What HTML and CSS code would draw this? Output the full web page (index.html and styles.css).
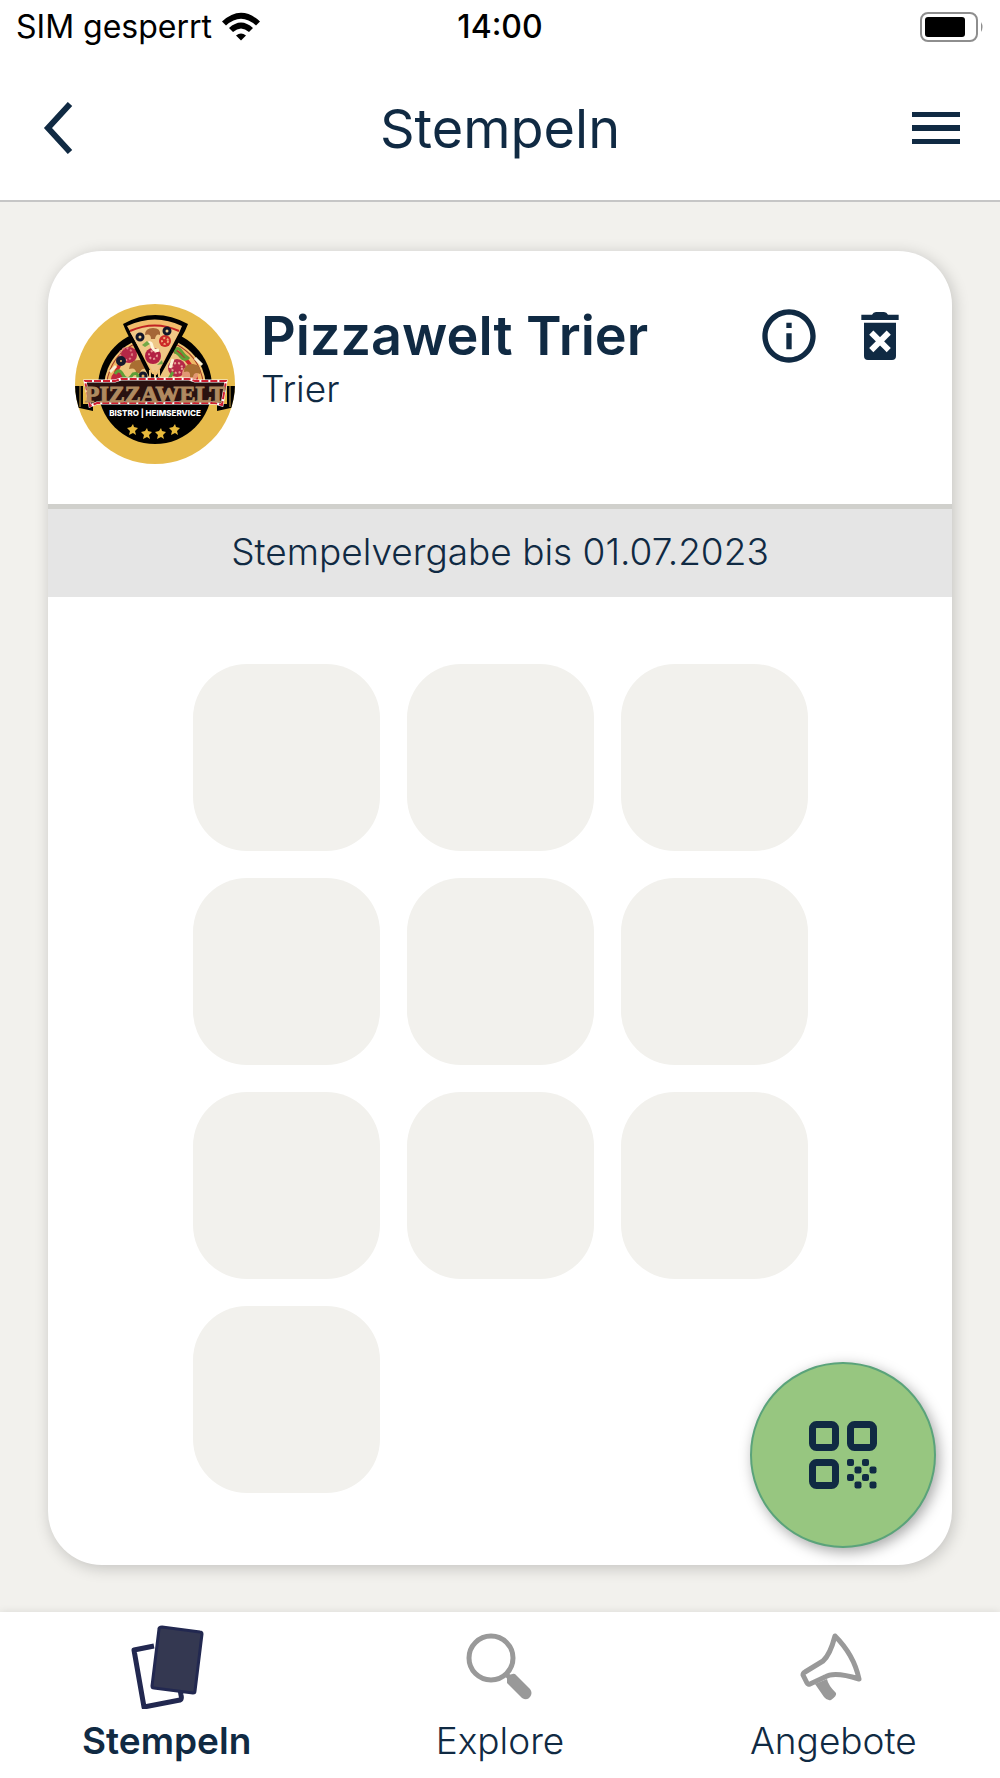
FILE: index.html
```html
<!DOCTYPE html>
<html lang="de">
<head>
  <meta charset="UTF-8">
  <meta name="viewport" content="width=device-width, initial-scale=1.0">
  <title>Stempeln</title>
  <link rel="stylesheet" href="styles.css">
</head>
<body>
  <div class="status-bar">
    <div class="carrier">
      <span>SIM gesperrt</span>
      <svg class="wifi" viewBox="0 0 38 30" aria-hidden="true">
        <path d="M0 9.500Q19-8 38 9.500L34 13.500Q19 0 4 13.500Z"/>
        <path d="M7 16Q19 5 31 16L27 20Q19 13 11 20Z"/>
        <path d="M14 23.500Q19 19.500 24 23.500L19 28.500Z"/>
      </svg>
    </div>
    <time class="clock">14:00</time>
    <svg class="battery" viewBox="0 0 64 30" aria-hidden="true">
      <rect x="1" y="1" width="56" height="28" rx="7" fill="none" stroke="#8e8e8e" stroke-width="2"/>
      <rect x="5" y="5" width="40" height="20" rx="3"/>
      <path d="M61 10q3 5 0 10z" fill="#8e8e8e"/>
    </svg>
  </div>

  <header class="header">
    <button class="icon-button" type="button" aria-label="Zurück">
      <svg class="back-icon" viewBox="0 0 30 52" aria-hidden="true">
        <path d="M27 2L5 26l22 24"/>
      </svg>
    </button>
    <h1 class="title">Stempeln</h1>
    <button class="icon-button" type="button" aria-label="Menü">
      <svg class="menu-icon" viewBox="0 0 48 32" aria-hidden="true">
        <path d="M0 0h48v5H0zM0 13h48v6H0zM0 27h48v5H0z"/>
      </svg>
    </button>
  </header>

  <main class="content">
    <article class="card">
      <div class="card-header">
        <svg class="logo" viewBox="0 0 160 160" role="img" aria-label="Pizzawelt Bistro Heimservice">
          <defs>
            <clipPath id="round"><circle cx="80" cy="80" r="80"/></clipPath>
            <clipPath id="upper"><path d="M0 0h160v80H0z"/></clipPath>
          </defs>
          <g clip-path="url(#round)">
            <path fill="#e7bb4c" d="M0 0h160v160H0z"/>
            <circle cx="80" cy="83" r="57"/>
            <!-- pizza -->
            <g clip-path="url(#upper)">
              <circle cx="80" cy="84" r="51" fill="#f3c573"/>
              <circle cx="80" cy="84" r="49" fill="#a33a25"/>
              <circle cx="80" cy="84" r="48" fill="#f0b765"/>
              <circle cx="80" cy="84" r="44" fill="#c9242b"/>
              <circle cx="80" cy="85" r="41" fill="#edc57f"/>
              <circle cx="54" cy="51" r="8" fill="#b52847"/>
              <circle cx="51" cy="50" r="6" fill="none" stroke="#dc7d82" stroke-width="2" stroke-dasharray="2 2"/>
              <circle cx="102" cy="64" r="9" fill="#b52847"/>
              <circle cx="102" cy="64" r="5" fill="none" stroke="#e7a294" stroke-width="2" stroke-dasharray="2 2"/>
              <circle cx="43" cy="75" r="7" fill="#bf263d"/>
              <circle cx="115" cy="70" r="8" fill="#e19773"/>
              <path d="M109 68q0-9 9-8t7 10q-6-3-7 3h-3q1-7-6-5z" fill="#a96e32"/>
              <path d="M54 65q1-9 10-9t7 9q-5-1-6 4h-4q0-6-7-4z" fill="#a96e32"/>
              <circle cx="46" cy="57" r="3" fill="#e9b563" stroke="#14182b" stroke-width="4"/>
              <circle cx="68" cy="72" r="3" fill="#e9b563" stroke="#14182b" stroke-width="3"/>
              <path d="M40 70q4-7 8 1t10-1q7-2 4 6M99 48q3-7 8 0t7 5q-4 5-8 0t-7-5M94 75l4-7" fill="none" stroke="#609e37" stroke-width="3"/>
              <path d="M35 68l6-6M120 54l7 7M98 55l-3 9" stroke="#f9eed0" stroke-width="3"/>
            </g>
            <!-- raised slice -->
            <path d="M48 20q32-18 65 0l-3 7-26 47q-4 9-10-1L51 27z"/>
            <path d="M52 22q28-13 55 0l-3 7-22 42-5-1-21-41z" fill="#f2bd6c"/>
            <path d="M55 28q25-11 49 0l-22 40h-4z" fill="#efc887"/>
            <path d="M55 27q25-11 49 0" fill="none" stroke="#c12324" stroke-width="2"/>
            <circle cx="78" cy="52" r="8" fill="#b32144"/>
            <circle cx="78" cy="51" r="4" fill="none" stroke="#e89894" stroke-width="2" stroke-dasharray="2 2"/>
            <circle cx="90" cy="37" r="6" fill="#cc2927"/>
            <circle cx="90" cy="37" r="3" fill="none" stroke="#efaa78" stroke-width="2" stroke-dasharray="2 2"/>
            <path d="M70 31q0-7 8-7t7 7q-4-2-5 4h-4q0-6-6-4z" fill="#a56737"/>
            <circle cx="65" cy="33" r="3" fill="#efcb89" stroke="#111629" stroke-width="3"/>
            <circle cx="92" cy="27" r="3" fill="#efcb89" stroke="#111629" stroke-width="3"/>
            <path d="M70 41q6-5 7 1t7 4" fill="none" stroke="#fff4da" stroke-width="3"/>
            <path d="M67 41l5-4 3 3-5 3zM82 61l5-5 1 4z" fill="#72a947"/>
            <path d="M75 66v8M80 66v10M84 66v7" stroke="#edbf76" stroke-width="2"/>
            <!-- name banner -->
            <path d="M0 82h8v18h10v7L0 103zM160 82h-8v18h-10v7l18-4z"/>
            <path d="M5 82v21M155 82v21" stroke="#d2a33c"/>
            <path d="M10 77h30l6-2h68l6 2h31l-4 24-7-2H22l-7 3z" fill="#2a1210" stroke="#fff" stroke-width="3"/>
            <path d="M10 77h30l6-2h68l6 2h31l-4 24-7-2H22l-7 3z" fill="none" stroke="#cf1f33" stroke-width="2" stroke-dasharray="7 2"/>
            <text class="logo-name" x="80" y="98" text-anchor="middle">PIZZAWELT</text>
            <text class="logo-sub" x="80" y="112" text-anchor="middle">BISTRO | HEIMSERVICE</text>
            <g fill="#e8ba3c">
              <path id="star" d="M58 120l1 3 4 1-3 3 1 4-3-2-4 2 1-4-3-3 4-1z"/>
              <use href="#star" x="14" y="4"/>
              <use href="#star" x="28" y="4"/>
              <use href="#star" x="42"/>
            </g>
          </g>
        </svg>
        <div class="shop">
          <h2 class="shop-name">Pizzawelt Trier</h2>
          <p class="shop-city">Trier</p>
        </div>
        <div class="actions">
          <button class="icon-button" type="button" aria-label="Information">
            <svg class="action-icon" viewBox="0 0 24 24" aria-hidden="true">
              <path d="M11 7h2v2h-2zm0 4h2v6h-2zm1-9C6.480 2 2 6.480 2 12s4.480 10 10 10 10-4.480 10-10S17.520 2 12 2zm0 18c-4.410 0-8-3.590-8-8s3.590-8 8-8 8 3.590 8 8-3.590 8-8 8z"/>
            </svg>
          </button>
          <button class="icon-button" type="button" aria-label="Karte löschen">
            <svg class="action-icon" viewBox="0 0 24 24" aria-hidden="true">
              <path d="M5 4h4q.5-1 1.500-1h3q1 0 1.500 1h4v2H5zM6 7h12v12.500a1.500 1.500 0 0 1-1.500 1.500h-9A1.500 1.500 0 0 1 6 19.500z"/>
              <path d="M9.500 11.500l5 5m0-5l-5 5" stroke="#fff" stroke-width="2.200" stroke-linecap="square"/>
            </svg>
          </button>
        </div>
      </div>

      <p class="valid-until">Stempelvergabe bis 01.07.2023</p>

      <div class="stamps">
        <div class="stamp"></div>
        <div class="stamp"></div>
        <div class="stamp"></div>
        <div class="stamp"></div>
        <div class="stamp"></div>
        <div class="stamp"></div>
        <div class="stamp"></div>
        <div class="stamp"></div>
        <div class="stamp"></div>
        <div class="stamp"></div>
      </div>

      <button class="scan-button" type="button" aria-label="QR-Code scannen">
        <svg class="qr-icon" viewBox="0 0 68 68" aria-hidden="true">
          <g fill="none" stroke="#102a43" stroke-width="7" stroke-linejoin="round">
            <path d="M3.500 7.500a4 4 0 0 1 4-4h15a4 4 0 0 1 4 4v15a4 4 0 0 1-4 4h-15a4 4 0 0 1-4-4z"/>
            <path d="M41.500 7.500a4 4 0 0 1 4-4h15a4 4 0 0 1 4 4v15a4 4 0 0 1-4 4h-15a4 4 0 0 1-4-4z"/>
            <path d="M3.500 45.500a4 4 0 0 1 4-4h15a4 4 0 0 1 4 4v15a4 4 0 0 1-4 4h-15a4 4 0 0 1-4-4z"/>
          </g>
          <g fill="#102a43">
            <rect x="38" y="38" width="7" height="7" rx="2"/>
            <rect x="53" y="38" width="7" height="7" rx="2"/>
            <rect x="45.500" y="45.500" width="7" height="7" rx="2"/>
            <rect x="60.500" y="45.500" width="7" height="7" rx="2"/>
            <rect x="38" y="53" width="7" height="7" rx="2"/>
            <rect x="53" y="53" width="7" height="7" rx="2"/>
            <rect x="45.500" y="60.500" width="7" height="7" rx="2"/>
            <rect x="60.500" y="60.500" width="7" height="7" rx="2"/>
          </g>
        </svg>
      </button>
    </article>
  </main>

  <nav class="tab-bar">
    <a class="tab active" href="#stempeln">
      <svg class="tab-icon" viewBox="0 0 84 84" aria-hidden="true">
        <g stroke-linejoin="round">
          <path d="M29 21L9 25l10 57 36-7q2-1 1-5l-3-17" fill="#fff" stroke="#222850" stroke-width="5"/>
          <path d="M37 2l38 5q2 0 2 2l-7 57q0 2-2 2l-39-5q-2 0-2-2l7-57q0-2 3-2z" fill="#343851" stroke="#222850" stroke-width="3"/>
        </g>
      </svg>
      <span>Stempeln</span>
    </a>
    <a class="tab" href="#explore">
      <svg class="tab-icon" viewBox="0 0 84 84" aria-hidden="true">
        <circle cx="33" cy="33" r="22" fill="none" stroke="#999" stroke-width="5"/>
        <path d="M47 48l6 6" stroke="#999" stroke-width="5"/>
        <path d="M49 53q3-5 8-4l15 15q3 4 0 8t-8 1L49 58z" fill="#999"/>
      </svg>
      <span>Explore</span>
    </a>
    <a class="tab" href="#angebote">
      <svg class="tab-icon" viewBox="0 0 84 84" aria-hidden="true">
        <path d="M44 11Q63 30 68 54q-25-8-34-2l-15 7q-2 1-3-1l-4-8q0-2 2-3l18-11q7-6 12-25z" fill="none" stroke="#999" stroke-width="5" stroke-linejoin="round"/>
        <path d="M24 59l12-5q1 6 9 14 1 3-5 7-4 1-7-3z" fill="#999"/>
      </svg>
      <span>Angebote</span>
    </a>
  </nav>
</body>
</html>
```
FILE: styles.css
```css
* {
  box-sizing: border-box;
}
body {
  display: flex;
  flex-direction: column;
  min-height: 100vh;
  margin: 0;
  background: #f2f1ed;
  color: #102a43;
  font-family: Inter, sans-serif;
}
svg {
  display: block;
}
.icon-button {
  padding: 0;
  border: none;
  background: none;
  color: inherit;
  cursor: pointer;
}

/* status bar */
.status-bar {
  display: grid;
  grid-template-columns: 1fr auto 1fr;
  align-items: center;
  height: 54px;
  padding: 0 16px;
  background: #fff;
  color: #000;
  font-size: 32px;
  line-height: 54px;
}
.carrier {
  display: flex;
  align-items: center;
  gap: 10px;
}
.wifi {
  width: 38px;
  height: 30px;
}
.clock {
  font-weight: 500;
}
.battery {
  justify-self: end;
  width: 64px;
  height: 30px;
}

/* header */
.header {
  display: grid;
  grid-template-columns: 1fr auto 1fr;
  align-items: center;
  height: 148px;
  padding: 2px 40px 0;
  background: #fff;
  border-bottom: 2px solid #c6c6c6;
}
.header .icon-button {
  justify-self: start;
}
.header .icon-button:last-child {
  justify-self: end;
}
.title {
  margin: 0;
  font-size: 54px;
  font-weight: 400;
}
.back-icon {
  width: 36px;
  height: 52px;
  fill: none;
  stroke: #102a43;
  stroke-width: 6;
}
.menu-icon {
  width: 48px;
  height: 32px;
  fill: #102a43;
}

/* card */
.content {
  flex: 1;
  padding: 49px 48px 47px;
}
.card {
  position: relative;
  background: #fff;
  border-radius: 54px;
  box-shadow: 2px 3px 16px rgba(0, 0, 0, 0.2);
}
.card-header {
  display: flex;
  align-items: flex-start;
  gap: 26px;
  padding: 53px 40px 40px 27px;
}
.logo {
  flex: none;
  width: 160px;
  height: 160px;
}
.logo-name {
  fill: #b08a60;
  stroke: #b08a60;
  stroke-width: 1px;
  font-family: "Liberation Serif", serif;
  font-size: 24px;
  font-weight: bold;
}
.logo-sub {
  fill: #fff;
  font-size: 8px;
  font-weight: 800;
}
.shop {
  flex: 1;
}
.shop-name {
  margin: 0;
  font-size: 54px;
  font-weight: 600;
  line-height: 64px;
}
.shop-city {
  margin: 0;
  font-size: 37px;
  font-weight: 300;
  line-height: 42px;
}
.actions {
  display: flex;
  gap: 27px;
}
.action-icon {
  width: 64px;
  height: 64px;
  fill: #102a43;
}
.valid-until {
  margin: 0;
  padding-bottom: 2px;
  border-top: 5px solid #d0d0cc;
  background: #e5e5e5;
  font-size: 37px;
  font-weight: 300;
  line-height: 86px;
  text-align: center;
}
.stamps {
  display: grid;
  grid-template-columns: repeat(3, 187px);
  justify-content: center;
  gap: 27px;
  padding: 67px 0 72px;
}
.stamp {
  aspect-ratio: 1;
  background: #f2f1ed;
  border-radius: 54px;
}
.scan-button {
  position: absolute;
  right: 16px;
  bottom: 17px;
  display: flex;
  align-items: center;
  justify-content: center;
  width: 186px;
  height: 186px;
  padding: 0;
  border: 2px solid #5aa37a;
  border-radius: 50%;
  background: #97c680;
  box-shadow: 3px 4px 14px rgba(0, 0, 0, 0.35);
  cursor: pointer;
}
.qr-icon {
  width: 68px;
  height: 68px;
}

/* tab bar */
.tab-bar {
  display: grid;
  grid-template-columns: repeat(3, 1fr);
  background: #fff;
  box-shadow: 0 0 8px rgba(0, 0, 0, 0.1);
}
.tab {
  display: flex;
  flex-direction: column;
  align-items: center;
  gap: 8px;
  padding: 13px 0;
  color: inherit;
  font-size: 37px;
  font-weight: 300;
  line-height: 48px;
  text-decoration: none;
}
.tab.active {
  font-weight: 600;
}
.tab-icon {
  width: 84px;
  height: 84px;
}
```
